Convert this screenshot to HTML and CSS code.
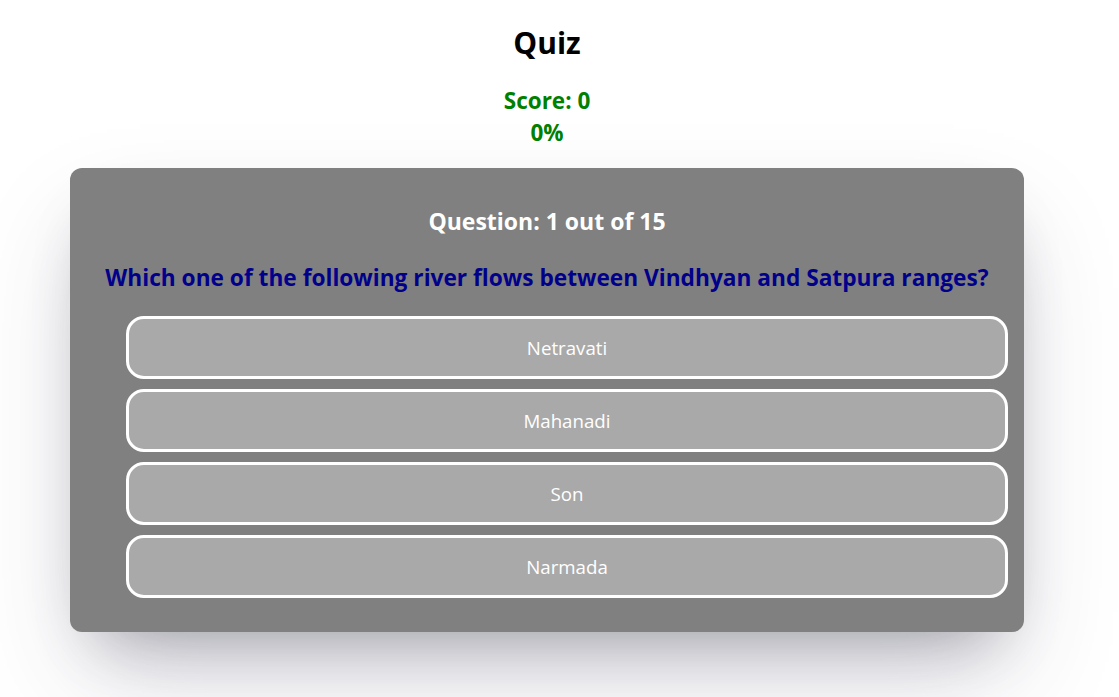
FILE: index.html
```html
<!DOCTYPE html>
<html>
<head>
<meta charset="utf-8">
<link rel="stylesheet" href="styles.css">
</head>
<body>
<div class="app">
  <h1 class="title">Quiz</h1>
  <div class="score">
    <div>Score: 0</div>
    <div>0%</div>
  </div>
  <div class="card">
    <h3 class="qnum">Question: 1 out of 15</h3>
    <h3 class="qtext">Which one of the following river flows between Vindhyan and Satpura ranges?</h3>
    <ul class="options">
      <li class="option">Netravati</li>
      <li class="option">Mahanadi</li>
      <li class="option">Son</li>
      <li class="option">Narmada</li>
    </ul>
  </div>
</div>
</body>
</html>
```
FILE: styles.css
```css
html, body {
  margin: 0;
  min-height: 100vh;
}
body {
  font-family: "Open Sans", "Noto Sans", sans-serif;
  background: #fff;
}
.app {
  display: flex;
  flex-direction: column;
  align-items: center;
  padding-right: 25px;
  padding-bottom: 60px;
}
.title {
  margin: 22px 0 0;
  font-size: 30px;
  line-height: 42px;
  font-weight: 700;
  color: #000;
}
.score {
  margin-top: 21px;
  color: #008000;
  font-weight: 700;
  font-size: 22.5px;
  line-height: 32px;
  text-align: center;
}
.card {
  margin-top: 19px;
  width: 954px;
  box-sizing: border-box;
  background: #808080;
  border-radius: 12px;
  padding: 16px;
  box-shadow: rgba(50, 50, 93, 0.25) 0 50px 100px -20px, rgba(0, 0, 0, 0.3) 0 30px 60px -30px;
}
.qnum {
  margin: 22px 0 0;
  text-align: center;
  color: #fff;
  font-size: 23px;
  line-height: 30px;
}
.qtext {
  margin: 27px 0 0;
  text-align: center;
  color: #00008b;
  font-size: 22.7px;
  line-height: 30px;
}
.options {
  list-style: none;
  margin: 23px 0 18px;
  padding: 0 0 0 40px;
  display: flex;
  flex-direction: column;
  gap: 10px;
}
.option {
  height: 63px;
  box-sizing: border-box;
  border: 3px solid #fff;
  border-radius: 18px;
  background: #a9a9a9;
  color: #fff;
  font-size: 18.7px;
  display: flex;
  align-items: center;
  justify-content: center;
}
```
